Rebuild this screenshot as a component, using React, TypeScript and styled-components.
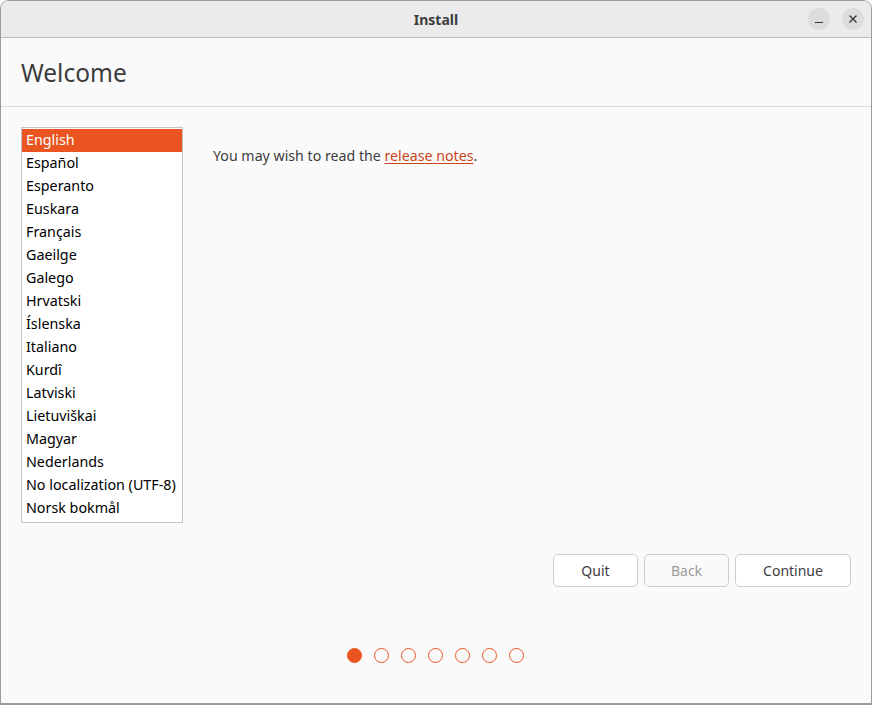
import React, { useState } from 'react';
import styled, { createGlobalStyle } from 'styled-components';

const GlobalStyle = createGlobalStyle`
  html, body {
    margin: 0;
    padding: 0;
    background: #fafafa;
  }
  * {
    box-sizing: border-box;
  }
`;

const languages = [
  'English',
  'Español',
  'Esperanto',
  'Euskara',
  'Français',
  'Gaeilge',
  'Galego',
  'Hrvatski',
  'Íslenska',
  'Italiano',
  'Kurdî',
  'Latviski',
  'Lietuviškai',
  'Magyar',
  'Nederlands',
  'No localization (UTF-8)',
  'Norsk bokmål',
];

const STEPS = 7;

export default function App() {
  const [selected, setSelected] = useState(0);

  return (
    <>
      <GlobalStyle />
      <Window>
        <TitleBar>
          <Title>Install</Title>
          <WindowControls>
            <RoundButton aria-label="minimize">
              <svg width="10" height="10" viewBox="0 0 10 10">
                <path d="M1 8.5h8" stroke="#333" strokeWidth="1.2" />
              </svg>
            </RoundButton>
            <RoundButton aria-label="close">
              <svg width="10" height="10" viewBox="0 0 10 10">
                <path d="M1.5 1.5l7 7M8.5 1.5l-7 7" stroke="#333" strokeWidth="1.3" />
              </svg>
            </RoundButton>
          </WindowControls>
        </TitleBar>

        <Header>
          <Heading>Welcome</Heading>
        </Header>

        <Body>
          <MainRow>
            <LanguageList>
              {languages.map((lang, idx) => (
                <LanguageItem key={lang} $active={idx === selected} onClick={() => setSelected(idx)}>
                  {lang}
                </LanguageItem>
              ))}
            </LanguageList>
            <Notes>
              You may wish to read the <NotesLink href="#">release notes</NotesLink>.
            </Notes>
          </MainRow>

          <ButtonRow>
            <ActionButton $width={85}>Quit</ActionButton>
            <ActionButton $width={85} disabled>
              Back
            </ActionButton>
            <ActionButton $width={116}>Continue</ActionButton>
          </ButtonRow>

          <Steps>
            {Array.from({ length: STEPS }).map((_, idx) => (
              <StepDot key={idx} $filled={idx === 0} />
            ))}
          </Steps>
        </Body>
      </Window>
    </>
  );
}

const Window = styled.div`
  width: 872px;
  height: 705px;
  display: flex;
  flex-direction: column;
  background: #fafafa;
  border: 1px solid #9c9c9c;
  border-bottom-width: 2px;
  border-radius: 9px 9px 0 0;
  overflow: hidden;
  font-family: 'Noto Sans', 'Open Sans', sans-serif;
  color: #3d3d3d;
`;

const TitleBar = styled.div`
  position: relative;
  height: 37px;
  flex-shrink: 0;
  display: flex;
  align-items: center;
  justify-content: center;
  background: #ebebeb;
  border-bottom: 1px solid #bdbdbd;
`;

const Title = styled.span`
  font-size: 14px;
  font-weight: 700;
  color: #3d3d3d;
`;

const WindowControls = styled.div`
  position: absolute;
  right: 7px;
  top: 7px;
  display: flex;
  gap: 12px;
`;

const RoundButton = styled.button`
  width: 22px;
  height: 22px;
  border: none;
  border-radius: 50%;
  background: #dcdcdc;
  padding: 0;
  display: flex;
  align-items: center;
  justify-content: center;
  cursor: pointer;
`;

const Header = styled.div`
  height: 69px;
  flex-shrink: 0;
  display: flex;
  align-items: center;
  padding-left: 20px;
  border-bottom: 1px solid #dadada;
`;

const Heading = styled.h1`
  margin: 0;
  font-size: 24.5px;
  font-weight: 400;
  color: #3d3d3d;
`;

const Body = styled.div`
  flex: 1;
  display: flex;
  flex-direction: column;
  padding: 20px 20px 0 20px;
`;

const MainRow = styled.div`
  display: flex;
  align-items: flex-start;
  gap: 30px;
`;

const LanguageList = styled.ul`
  width: 162px;
  height: 396px;
  margin: 0;
  padding: 1px 0;
  list-style: none;
  background: #ffffff;
  border: 1px solid #c4c4c4;
  overflow: hidden;
`;

const LanguageItem = styled.li<{ $active: boolean }>`
  height: 23px;
  line-height: 22px;
  padding-left: 4px;
  font-size: 14.3px;
  white-space: nowrap;
  cursor: pointer;
  color: ${({ $active }) => ($active ? '#ffffff' : '#000000')};
  background: ${({ $active }) => ($active ? '#e95420' : 'transparent')};
`;

const Notes = styled.p`
  margin: 20px 0 0 0;
  font-size: 14.2px;
  line-height: 18px;
  color: #3d3d3d;
`;

const NotesLink = styled.a`
  color: #c7441a;
  text-decoration: underline;
  text-underline-offset: 2px;
`;

const ButtonRow = styled.div`
  display: flex;
  justify-content: flex-end;
  gap: 6px;
  margin-top: 31px;
`;

const ActionButton = styled.button<{ $width: number }>`
  width: ${({ $width }) => $width}px;
  height: 33px;
  background: #ffffff;
  border: 1px solid #cdcdcd;
  border-radius: 5px;
  font-family: inherit;
  font-size: 14px;
  color: #3d3d3d;
  cursor: pointer;

  &:disabled {
    color: #9a9a9a;
    background: #fafafa;
    cursor: default;
  }
`;

const Steps = styled.div`
  display: flex;
  justify-content: center;
  gap: 12px;
  margin-top: 61px;
  margin-left: -1px;
`;

const StepDot = styled.span<{ $filled: boolean }>`
  width: 15px;
  height: 15px;
  border-radius: 50%;
  border: 1.5px solid #e95420;
  background: ${({ $filled }) => ($filled ? '#e95420' : 'transparent')};
`;
